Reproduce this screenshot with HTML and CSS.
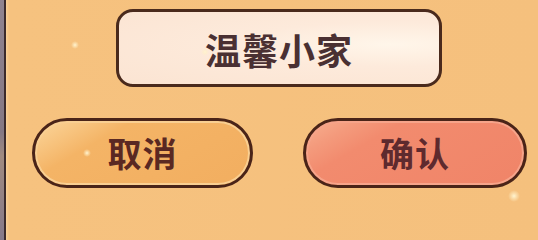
FILE: index.html
```html
<!DOCTYPE html>
<html lang="zh">
<head>
<meta charset="utf-8">
<title>温馨小家</title>
<link rel="stylesheet" href="styles.css">
</head>
<body>
<div class="frame">
  <div class="side"></div>
  <div class="panel">
    <div class="title-row">
      <div class="name-box">温馨小家</div>
    </div>
    <div class="btn-row">
      <div class="btn btn-cancel">取消</div>
      <div class="btn btn-ok">确认</div>
    </div>
    <span class="spark spark-a"></span>
    <span class="spark spark-b"></span>
    <span class="spark spark-c"></span>
    <span class="spark spark-d"></span>
  </div>
</div>
</body>
</html>
```
FILE: styles.css
```css
html, body {
  margin: 0;
  padding: 0;
}
body {
  width: 538px;
  overflow: hidden;
  background: #f5c07d;
  font-family: "Noto Sans CJK SC", "Noto Sans", sans-serif;
}
.frame {
  display: flex;
  height: max(210px, 100vh);
}
.side {
  width: 4px;
  background: linear-gradient(180deg, #8f8390 0%, #857884 55%, #a08a80 65%, #86798a 100%);
}
.panel {
  position: relative;
  flex: 1;
  border-left: 2px solid #3b2a2c;
  background: linear-gradient(90deg, #f9d29a 0px, #f6c27f 3px, #f5c07d 100%);
  box-sizing: border-box;
  padding-top: 9px;
}
.title-row {
  display: flex;
  padding-left: 110px;
}
.name-box {
  width: 326px;
  height: 78px;
  box-sizing: border-box;
  border: 3px solid #4a2a1c;
  border-radius: 17px;
  background: radial-gradient(ellipse at 85% 45%, #fff6ea 0%, #fdeadb 40%, #fbe4d2 100%);
  display: flex;
  align-items: center;
  justify-content: center;
  font-size: 36px;
  font-weight: 600;
  letter-spacing: 1px;
  color: #4a3032;
  line-height: 1;
  padding-top: 2px;
}
.btn-row {
  display: flex;
  gap: 50px;
  margin-top: 31px;
  padding-left: 26px;
}
.btn {
  height: 70px;
  box-sizing: border-box;
  border: 3px solid #4a2418;
  border-radius: 35px;
  display: flex;
  align-items: center;
  justify-content: center;
  font-size: 34px;
  font-weight: 600;
  line-height: 1;
  letter-spacing: 1px;
}
.btn-cancel {
  width: 221px;
  color: #5a2822;
  background: linear-gradient(150deg, #fbd69c 0%, #f7c27c 18%, #f4b466 30%, #f2ae60 100%);
  box-shadow: inset 0 0 0 2px #f9cf92;
}
.btn-ok {
  width: 224px;
  color: #5e2a2e;
  background: linear-gradient(150deg, #f8b090 0%, #f49a7c 16%, #f28b6e 30%, #f08468 100%);
  box-shadow: inset 0 0 0 2px #f6a48a;
}
.spark {
  position: absolute;
  width: 8px;
  height: 8px;
  border-radius: 50%;
  background: radial-gradient(circle, #fff4d0 0%, rgba(255, 240, 200, 0.6) 30%, rgba(255, 230, 180, 0) 70%);
}
.spark-a { left: 65px; top: 41px; }
.spark-b { left: 195px; top: 48px; }
.spark-c { left: 77px; top: 149px; }
.spark-d { left: 502px; top: 190px; width: 12px; height: 12px; }
```
